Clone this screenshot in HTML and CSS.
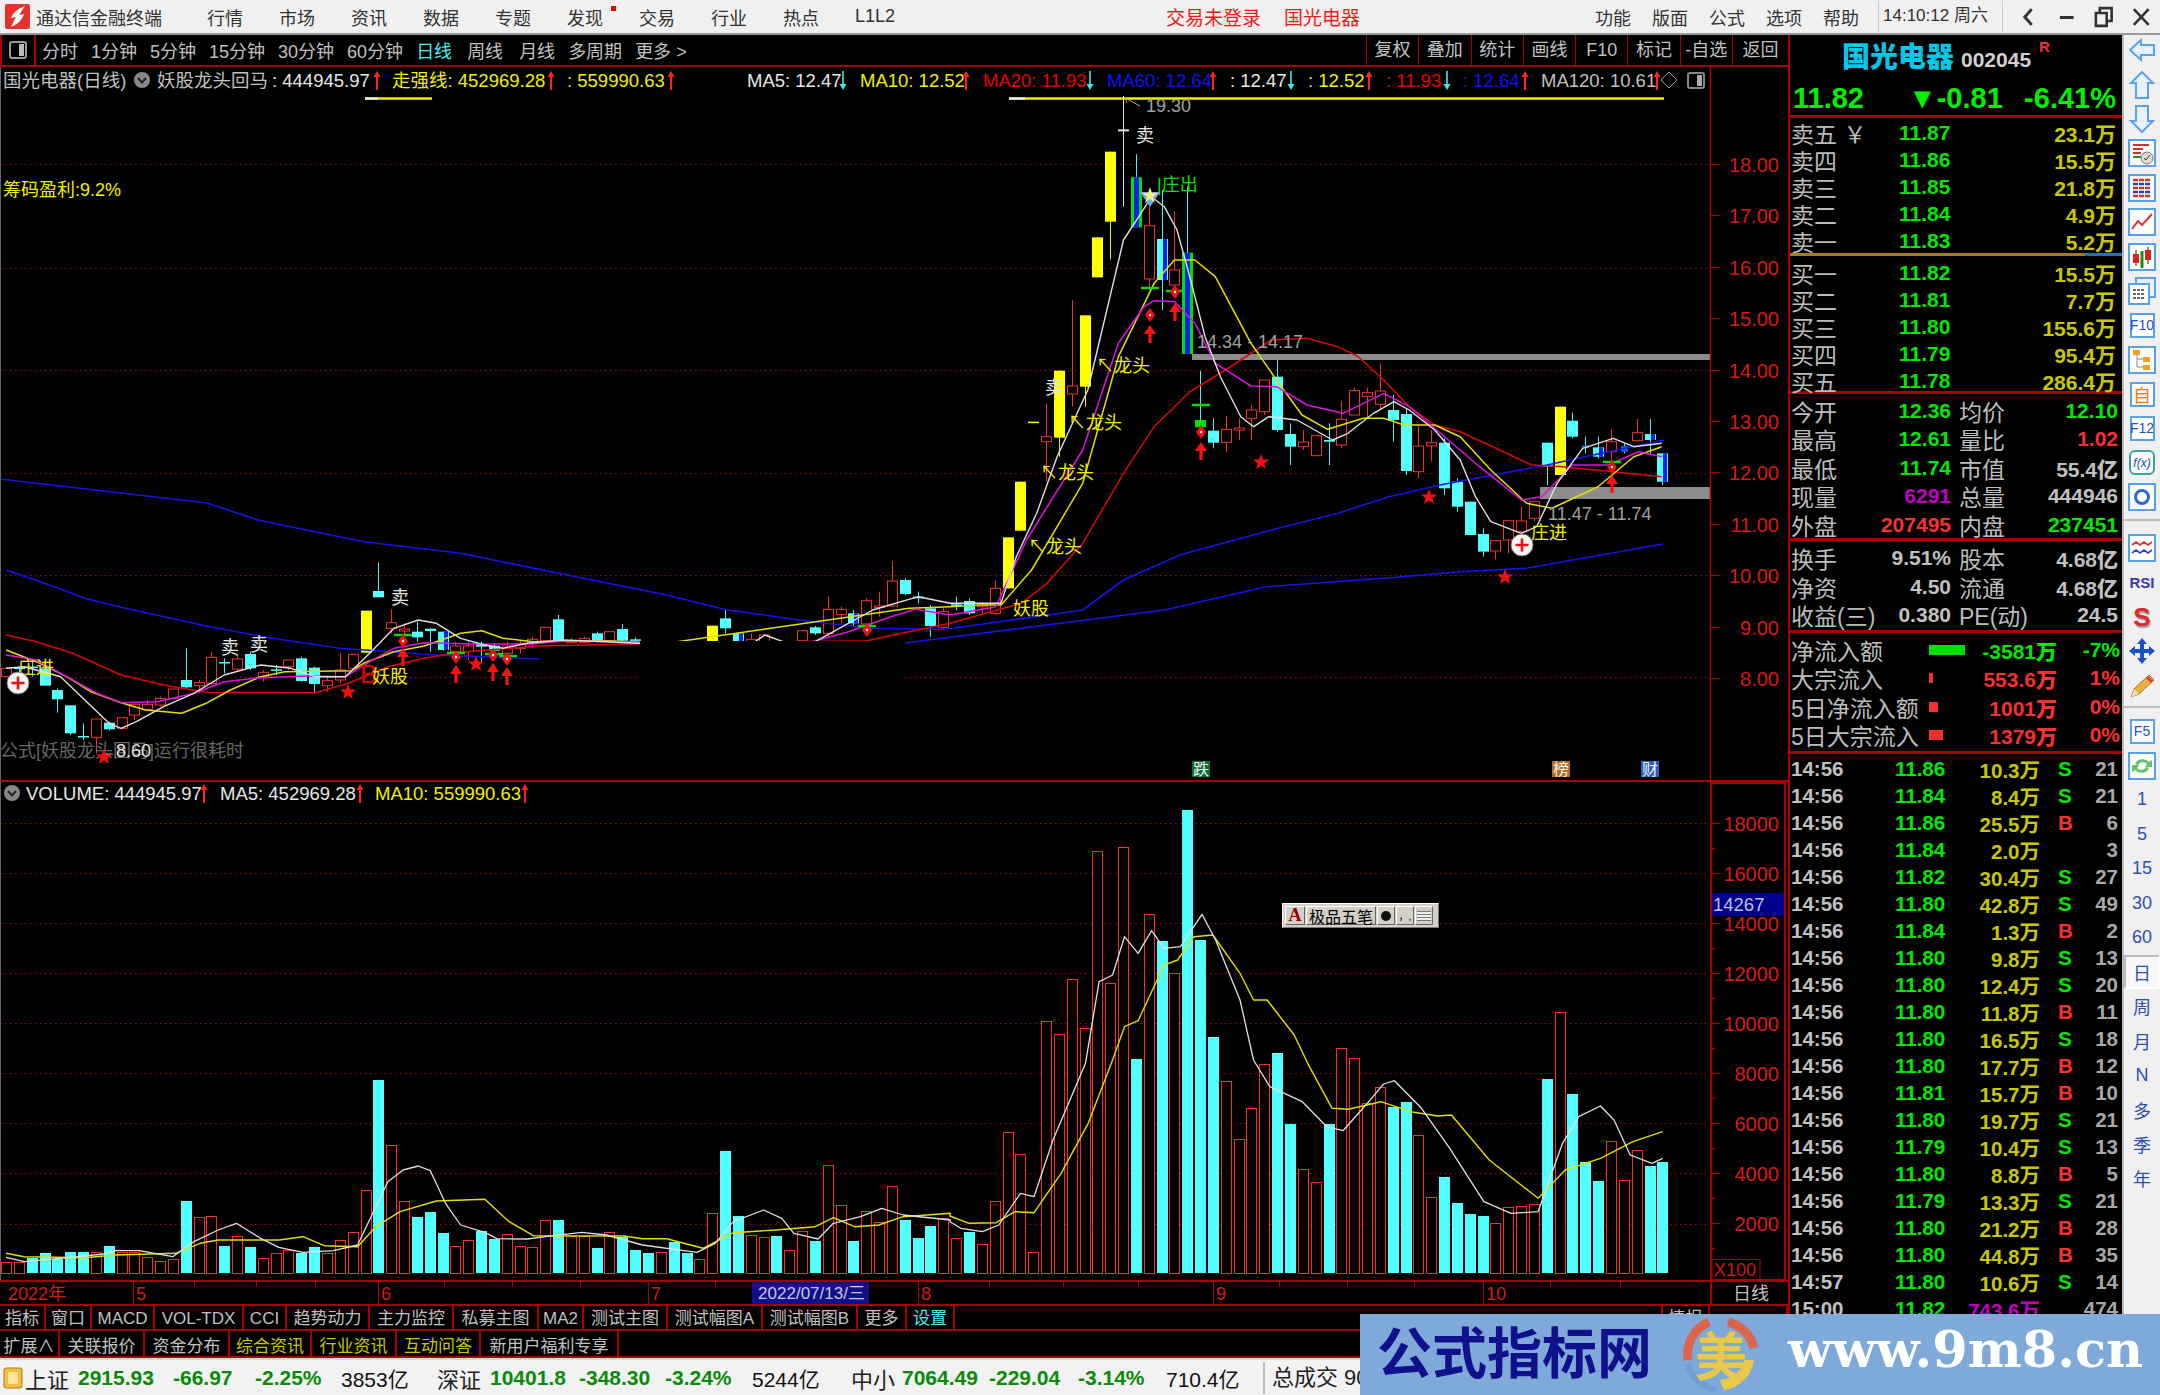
FILE: index.html
```html
<!DOCTYPE html>
<html lang="zh-CN">
<head>
<meta charset="utf-8">
<title>通达信金融终端</title>
<link rel="stylesheet" href="styles.css">
</head>
<body>
<div class="screen">
  <header class="titlebar">
    <svg class="logo" viewBox="0 0 25 25"><rect width="25" height="25" rx="2" fill="#e5322c"/><path d="M20 2 C12 5 8 9 6 14 L11 13 C9 16 8 19 6 23 C13 20 17 16 19 10 L14 11 C16 8 18 5 20 2Z" fill="#fff"/></svg>
    <span class="appname">通达信金融终端</span>
    <nav class="menu">
      <span>行情</span><span>市场</span><span>资讯</span><span>数据</span><span>专题</span><span class="dot">发现</span><span>交易</span><span>行业</span><span>热点</span><span>L1L2</span>
    </nav>
    <div class="alerts"><span>交易未登录</span><span>国光电器</span></div>
    <nav class="menu2"><span>功能</span><span>版面</span><span>公式</span><span>选项</span><span>帮助</span></nav>
    <div class="clock">14:10:12 周六</div>
    <div class="winctl">
      <svg viewBox="0 0 38 32"><path d="M22 8 L15 16 L22 24" fill="none" stroke="#333" stroke-width="3"/></svg>
      <svg viewBox="0 0 38 32"><path d="M12 16.5 H26" stroke="#333" stroke-width="3"/></svg>
      <svg viewBox="0 0 38 32"><path d="M11 12 H22 V25 H11Z M15 12 V7 H27 V20 H22" fill="none" stroke="#333" stroke-width="2.6"/></svg>
      <svg viewBox="0 0 38 32"><path d="M11 8 L26 24 M26 8 L11 24" stroke="#333" stroke-width="2.6"/></svg>
    </div>
  </header>

  <main class="workspace">
    <section class="left">
      <div class="toolbar">
        <div class="tb-btn"><svg width="18" height="18" viewBox="0 0 18 18"><rect x="1" y="1" width="16" height="16" rx="2" fill="none" stroke="#9a9a9a" stroke-width="2"/><rect x="10" y="3" width="5" height="12" fill="#bbb"/></svg></div>
        <div class="periods">
          <span>分时</span><span>1分钟</span><span>5分钟</span><span>15分钟</span><span>30分钟</span><span>60分钟</span><span class="on">日线</span><span class="p2">周线</span><span class="p3">月线</span><span>多周期</span><span>更多 &gt;</span>
        </div>
        <div class="tools"><span>复权</span><span>叠加</span><span>统计</span><span>画线</span><span>F10</span><span>标记</span><span>-自选</span><span class="last">返回</span></div>
      </div>

      <div class="chart">
        <svg class="plot" width="1788" height="1215" viewBox="0 67 1788 1215">
          <defs>
            <path id="au" d="M0 0 L3.5 6 H1 V19 H-1 V6 H-3.5Z" fill="#ff2020"/>
            <path id="ad" d="M-.8 0 H.8 V13 H3.5 L0 19 L-3.5 13 H-.8Z" fill="#40e8f0"/>
            <path id="big" d="M0 0 L6 9 H1.6 V18 H-1.6 V9 H-6Z" fill="#ff1010"/>
            <path id="star" d="M0 -8 L2.2 -2.5 L8 -2.5 L3.4 1.2 L5 7 L0 3.6 L-5 7 L-3.4 1.2 L-8 -2.5 L-2.2 -2.5Z" fill="#f01010"/>
            <g id="dia"><path d="M0 -7 L5 0 L0 7 L-5 0Z" fill="#f01010"/><circle r="1.2" fill="#fff"/></g>
            <g id="plus"><circle r="11" fill="#f4f4f4" stroke="#777"/><path d="M0 -6.5 V6.5 M-6.5 0 H6.5" stroke="#e81010" stroke-width="2.6"/></g>
            <path id="dash" d="M-9 -1.2 H9 V1.2 H-9Z" fill="#00e000"/>
            <g id="chev"><circle r="8" fill="#888"/><path d="M-4 -2 L0 2.5 L4 -2" fill="none" stroke="#222" stroke-width="2"/></g>
          </defs>

          <g id="grid"></g>
          <rect class="band" x="1192" y="354" width="518" height="6"/>
          <rect class="band" x="1540" y="487" width="170" height="12"/>
          <g id="candles"></g>
          <g id="lines"></g>
          <rect class="mask" x="640" y="641" width="262" height="120"/>

          <g class="info">
            <text x="3" y="87" class="g">国光电器(日线)</text>
            <use href="#chev" x="142" y="80"/>
            <text x="157" y="87" class="g">妖股龙头回马</text>
            <text x="272" y="87" class="w">: 444945.97</text><use href="#au" x="377" y="71"/>
            <text x="392" y="87" class="y">走强线: 452969.28</text><use href="#au" x="551" y="71"/>
            <text x="567" y="87" class="y">: 559990.63</text><use href="#au" x="671" y="71"/>
            <text x="747" y="87" class="w">MA5: 12.47</text><use href="#ad" x="843" y="71"/>
            <text x="860" y="87" class="y">MA10: 12.52</text><use href="#au" x="966" y="71"/>
            <text x="983" y="87" class="r">MA20: 11.93</text><use href="#ad" x="1090" y="71"/>
            <text x="1107" y="87" class="b">MA60: 12.64</text><use href="#au" x="1213" y="71"/>
            <text x="1230" y="87" class="w">: 12.47</text><use href="#ad" x="1291" y="71"/>
            <text x="1308" y="87" class="y">: 12.52</text><use href="#au" x="1369" y="71"/>
            <text x="1386" y="87" class="r">: 11.93</text><use href="#ad" x="1447" y="71"/>
            <text x="1463" y="87" class="b">: 12.64</text><use href="#au" x="1525" y="71"/>
            <text x="1541" y="87" class="g">MA120: 10.61</text><use href="#au" x="1657" y="71"/>
            <path d="M1669 72 L1677 80 L1669 88 L1661 80Z" fill="none" stroke="#999"/>
            <rect x="1688" y="73" width="16" height="15" rx="2" fill="none" stroke="#888" stroke-width="2"/><rect x="1697" y="75" width="5" height="11" fill="#aaa"/>
          </g>

          <path d="M365 98.5 H432" class="yl"/><path d="M365 98.5 H378" class="wl"/>
          <path d="M1009 98.5 H1664" class="yl"/><path d="M1009 98.5 H1025" class="wl"/>
          <path d="M1125 98 L1127 103 M1125 98 L1140 106" class="gl"/>

          <g class="ann">
            <text x="3" y="196" class="y">筹码盈利:9.2%</text>
            <text x="1146" y="112" class="g2">19.30</text>
            <text x="1197" y="348" class="g2">14.34 - 14.17</text>
            <text x="1548" y="520" class="g2">11.47 - 11.74</text>
            <text x="0" y="757" class="dim">公式[妖股龙头回马]运行很耗时</text>
            <text x="98" y="757" class="w2">←8.60</text>
            <text x="1136" y="142" class="w2">卖</text>
            <text x="1045" y="394" class="w2">卖</text>
            <text x="221" y="654" class="w2">卖</text>
            <text x="250" y="651" class="w2">卖</text>
            <text x="391" y="604" class="w2">卖</text>
            <text x="1096" y="372" class="y">↖龙头</text>
            <text x="1068" y="429" class="y">↖龙头</text>
            <text x="1040" y="479" class="y">↖龙头</text>
            <text x="1028" y="553" class="y">↖龙头</text>
            <text x="1013" y="615" class="y">妖股</text>
            <text x="360" y="683" class="rb">B</text><text x="372" y="683" class="y">妖股</text>
            <text x="1157" y="191" class="gr">|庄出</text>
            <text x="1531" y="539" class="y">庄进</text>
            <text x="18" y="674" class="y">庄进</text>
          </g>

          <g id="marks"></g>
          <use href="#plus" x="1522" y="545"/>
          <use href="#plus" x="18" y="683"/>
          <g transform="translate(1150 196)"><path d="M-10 -4 L10 -4 L0 11Z" fill="#6fa8f0"/><path d="M0 -9 L2 -3 L8 -3 L3 1 L5 7 L0 3 L-5 7 L-3 1 L-8 -3 L-2 -3Z" fill="#f0f080"/></g>

          <g class="flags">
            <rect x="1192" y="761" width="18" height="16" fill="#0a6e35"/><text x="1193" y="775">跌</text>
            <rect x="1552" y="761" width="18" height="16" fill="#b56a18"/><text x="1553" y="775">榜</text>
            <rect x="1641" y="761" width="18" height="16" fill="#2b5fc0"/><text x="1642" y="775">财</text>
          </g>

          <g id="axis"></g>

          <g class="info">
            <use href="#chev" x="12" y="793"/>
            <text x="26" y="800" class="w">VOLUME: 444945.97</text><use href="#au" x="204" y="784"/>
            <text x="220" y="800" class="w">MA5: 452969.28</text><use href="#au" x="360" y="784"/>
            <text x="375" y="800" class="y">MA10: 559990.63</text><use href="#au" x="525" y="784"/>
          </g>

          <g id="vol"></g>

          <rect class="vbox" x="1711" y="783" width="74" height="497"/>
          <rect x="1712" y="893" width="72" height="23" fill="#00008c"/>
          <text x="1713" y="911" class="axv">14267</text>
          <rect class="xbox" x="1712" y="1259.5" width="48" height="20"/>
          <text x="1714" y="1276" class="xt">X100</text>
        </svg>

        <div class="ime">
          <span class="ime-a">A</span><span class="ime-n">极品五笔</span>
          <span class="ime-i ime-moon"></span><span class="ime-i">，,</span><span class="ime-i ime-kb"></span>
        </div>
      </div>

      <div class="dates">
        <span class="d0">2022年</span><span class="d1">5</span><span class="d2">6</span><span class="d2">7</span><span class="d3">8</span><span class="d2">9</span><span class="d4">10</span><span class="d5">日线</span>
        <span class="cursor">2022/07/13/三</span>
      </div>
      <div class="tabs t1">
        <span>指标</span><span>窗口</span><span>MACD</span><span>VOL-TDX</span><span>CCI</span><span>趋势动力</span><span>主力监控</span><span>私募主图</span><span>MA2</span><span>测试主图</span><span>测试幅图A</span><span>测试幅图B</span><span>更多</span><span class="cy">设置</span><span></span><span>情报</span><span></span>
      </div>
      <div class="tabs t2">
        <span>扩展∧</span><span>关联报价</span><span>资金分布</span><span class="ol">综合资讯</span><span class="ol">行业资讯</span><span class="ol">互动问答</span><span>新用户福利专享</span><span></span>
      </div>
    </section>

    <aside class="quote">
      <div class="q-head">
        <div class="q-name"><strong>国光电器</strong><span>002045</span><sup>R</sup></div>
        <div class="q-price"><span>11.82</span><span>▼-0.81</span><span>-6.41%</span></div>
      </div>
      <div class="book upper">
        <div><label>卖五 ￥</label><b>11.87</b><em>23.1万</em></div>
        <div><label>卖四</label><b>11.86</b><em>15.5万</em></div>
        <div><label>卖三</label><b>11.85</b><em>21.8万</em></div>
        <div><label>卖二</label><b>11.84</b><em>4.9万</em></div>
        <div><label>卖一</label><b>11.83</b><em>5.2万</em></div>
      </div>
      <div class="book-sep"></div>
      <div class="book lastbook">
        <div><label>买一</label><b>11.82</b><em>15.5万</em></div>
        <div><label>买二</label><b>11.81</b><em>7.7万</em></div>
        <div><label>买三</label><b>11.80</b><em>155.6万</em></div>
        <div><label>买四</label><b>11.79</b><em>95.4万</em></div>
        <div><label>买五</label><b>11.78</b><em>286.4万</em></div>
      </div>
      <div class="stats s1">
        <div><label>今开</label><b class="gn">12.36</b><label>均价</label><b class="gn">12.10</b></div>
        <div><label>最高</label><b class="gn">12.61</b><label>量比</label><b class="rd">1.02</b></div>
        <div><label>最低</label><b class="gn">11.74</b><label>市值</label><b>55.4亿</b></div>
        <div><label>现量</label><b class="mg">6291</b><label>总量</label><b>444946</b></div>
        <div><label>外盘</label><b class="rd">207495</b><label>内盘</label><b class="gn">237451</b></div>
      </div>
      <div class="stats s2">
        <div><label>换手</label><b>9.51%</b><label>股本</label><b>4.68亿</b></div>
        <div><label>净资</label><b>4.50</b><label>流通</label><b>4.68亿</b></div>
        <div><label>收益(三)</label><b>0.380</b><label>PE(动)</label><b>24.5</b></div>
      </div>
      <div class="flow">
        <div><label>净流入额</label><i class="bar bg-g" style="width:36px"></i><b class="gn">-3581万</b><b class="gn">-7%</b></div>
        <div><label>大宗流入</label><i class="bar bg-r" style="width:4px"></i><b class="rd">553.6万</b><b class="rd">1%</b></div>
        <div><label>5日净流入额</label><i class="bar bg-r" style="width:9px"></i><b class="rd">1001万</b><b class="rd">0%</b></div>
        <div><label>5日大宗流入</label><i class="bar bg-r" style="width:14px"></i><b class="rd">1379万</b><b class="rd">0%</b></div>
      </div>
      <div class="ticks">
        <div><span>14:56</span><b>11.86</b><em>10.3万</em><i class="gn">S</i><u>21</u></div>
        <div><span>14:56</span><b>11.84</b><em>8.4万</em><i class="gn">S</i><u>21</u></div>
        <div><span>14:56</span><b>11.86</b><em>25.5万</em><i class="rd">B</i><u>6</u></div>
        <div><span>14:56</span><b>11.84</b><em>2.0万</em><i></i><u>3</u></div>
        <div><span>14:56</span><b>11.82</b><em>30.4万</em><i class="gn">S</i><u>27</u></div>
        <div><span>14:56</span><b>11.80</b><em>42.8万</em><i class="gn">S</i><u>49</u></div>
        <div><span>14:56</span><b>11.84</b><em>1.3万</em><i class="rd">B</i><u>2</u></div>
        <div><span>14:56</span><b>11.80</b><em>9.8万</em><i class="gn">S</i><u>13</u></div>
        <div><span>14:56</span><b>11.80</b><em>12.4万</em><i class="gn">S</i><u>20</u></div>
        <div><span>14:56</span><b>11.80</b><em>11.8万</em><i class="rd">B</i><u>11</u></div>
        <div><span>14:56</span><b>11.80</b><em>16.5万</em><i class="gn">S</i><u>18</u></div>
        <div><span>14:56</span><b>11.80</b><em>17.7万</em><i class="rd">B</i><u>12</u></div>
        <div><span>14:56</span><b>11.81</b><em>15.7万</em><i class="rd">B</i><u>10</u></div>
        <div><span>14:56</span><b>11.80</b><em>19.7万</em><i class="gn">S</i><u>21</u></div>
        <div><span>14:56</span><b>11.79</b><em>10.4万</em><i class="gn">S</i><u>13</u></div>
        <div><span>14:56</span><b>11.80</b><em>8.8万</em><i class="rd">B</i><u>5</u></div>
        <div><span>14:56</span><b>11.79</b><em>13.3万</em><i class="gn">S</i><u>21</u></div>
        <div><span>14:56</span><b>11.80</b><em>21.2万</em><i class="rd">B</i><u>28</u></div>
        <div><span>14:56</span><b>11.80</b><em>44.8万</em><i class="rd">B</i><u>35</u></div>
        <div><span>14:57</span><b>11.80</b><em>10.6万</em><i class="gn">S</i><u>14</u></div>
        <div><span>15:00</span><b>11.82</b><em class="mg">743.6万</em><i></i><u>474</u></div>
      </div>
    </aside>

    <aside class="rail">
      <div class="ri"><svg viewBox="0 0 30 30"><path d="M3 15 L14 5 V10 H27 V20 H14 V25Z" fill="#e8f2fc" stroke="#5aa2e6" stroke-width="2"/></svg></div>
      <div class="ri"><svg viewBox="0 0 30 30"><path d="M15 2 L26 13 H21 V28 H9 V13 H4Z" fill="#e8f2fc" stroke="#5aa2e6" stroke-width="2"/></svg></div>
      <div class="ri"><svg viewBox="0 0 30 30"><path d="M15 28 L26 17 H21 V2 H9 V17 H4Z" fill="#e8f2fc" stroke="#5aa2e6" stroke-width="2"/></svg></div>
      <div class="ri"><svg viewBox="0 0 30 30"><rect x="2" y="2" width="26" height="26" fill="#fff" stroke="#5aa2e6" stroke-width="2"/><path d="M6 7 H22 M6 11 H16 M6 15 H14" stroke="#d03030" stroke-width="2"/><path d="M6 19 H14" stroke="#2a9a2a" stroke-width="2"/><circle cx="20" cy="20" r="6" fill="#ddd" stroke="#777"/><path d="M17 20 L19 22 L23 17" fill="none" stroke="#333"/></svg></div>
      <div class="ri"><svg viewBox="0 0 30 30"><rect x="2" y="2" width="26" height="26" fill="#fff" stroke="#5aa2e6" stroke-width="2"/><path d="M6 7 H24 M6 15 H24 M6 23 H24" stroke="#d03030" stroke-width="2.5" stroke-dasharray="5 1"/><path d="M6 11 H24 M6 19 H24" stroke="#2040c0" stroke-width="2.5" stroke-dasharray="5 1"/></svg></div>
      <div class="ri"><svg viewBox="0 0 30 30"><rect x="2" y="2" width="26" height="26" fill="#fff" stroke="#5aa2e6" stroke-width="2"/><path d="M5 22 L11 14 L15 18 L25 7" fill="none" stroke="#e83030" stroke-width="2"/></svg></div>
      <div class="ri"><svg viewBox="0 0 30 30"><rect x="2" y="2" width="26" height="26" fill="#fff" stroke="#5aa2e6" stroke-width="2"/><path d="M9 8 V24 M21 5 V22" stroke="#222"/><rect x="6" y="12" width="6" height="9" fill="#e02020"/><rect x="18" y="8" width="6" height="10" fill="#e02020"/><path d="M15 9 V26" stroke="#1a8a1a" stroke-width="3"/></svg></div>
      <div class="ri"><svg viewBox="0 0 30 30"><rect x="9" y="2" width="19" height="19" fill="#eef" stroke="#5aa2e6" stroke-width="2"/><rect x="2" y="8" width="20" height="20" fill="#fff" stroke="#5aa2e6" stroke-width="2"/><path d="M6 14 H18 M6 18 H18 M6 22 H18" stroke="#666" stroke-width="2" stroke-dasharray="3 1"/></svg></div>
      <div class="ri"><span class="rb-box blue">F10</span></div>
      <div class="ri"><svg viewBox="0 0 30 30"><rect x="2" y="2" width="26" height="26" fill="#fff" stroke="#5aa2e6" stroke-width="2"/><path d="M10 8 V22 H17 M10 14 H17" fill="none" stroke="#888"/><rect x="6" y="5" width="7" height="5" fill="#f0a020"/><rect x="16" y="12" width="7" height="5" fill="#f0a020"/><rect x="16" y="20" width="7" height="5" fill="#f0a020"/></svg></div>
      <div class="ri"><span class="rb-box orange">自</span></div>
      <div class="ri"><span class="rb-box blue">F12</span></div>
      <div class="ri"><span class="rb-box fx">f(x)</span></div>
      <div class="ri"><svg viewBox="0 0 30 30"><rect x="2" y="2" width="26" height="26" fill="#fff" stroke="#5aa2e6" stroke-width="2"/><circle cx="15" cy="15" r="6.5" fill="none" stroke="#2a6ad0" stroke-width="3"/></svg></div>
      <div class="rdiv"></div>
      <div class="ri"><svg viewBox="0 0 30 30"><rect x="2" y="2" width="26" height="26" fill="#fff" stroke="#5aa2e6" stroke-width="2"/><path d="M5 12 L9 9 L13 12 L17 9 L21 12 L25 9" fill="none" stroke="#e03030" stroke-width="1.6"/><path d="M5 20 L9 17 L13 20 L17 17 L21 20 L25 17" fill="none" stroke="#3040d0" stroke-width="1.6"/></svg></div>
      <div class="ri rsi">RSI</div>
      <div class="ri dollar">S</div>
      <div class="ri"><svg viewBox="0 0 30 30"><path d="M15 2 L20 8 H17 V13 H22 V10 L28 15 L22 20 V17 H17 V22 H20 L15 28 L10 22 H13 V17 H8 V20 L2 15 L8 10 V13 H13 V8 H10Z" fill="#1c50c8"/></svg></div>
      <div class="ri"><svg viewBox="0 0 30 30"><path d="M4 26 L7 18 L22 4 L27 9 L12 23Z" fill="#f0b040" stroke="#a07020"/><path d="M4 26 L7 18 L12 23Z" fill="#f4dcb0"/><path d="M20 6 L25 11" stroke="#d04040" stroke-width="3"/></svg></div>
      <div class="rdiv r2"></div>
      <div class="ri"><span class="rb-box blue">F5</span></div>
      <div class="ri"><svg viewBox="0 0 30 30"><rect x="2" y="2" width="26" height="26" fill="#fff" stroke="#5aa2e6" stroke-width="2"/><path d="M8 13 A8 7 0 0 1 22 11 L25 9 V16 H18 L20 13 A5 4 0 0 0 11 14Z M22 17 A8 7 0 0 1 8 19 L5 21 V14 H12 L10 17 A5 4 0 0 0 19 16Z" fill="#62c46a"/></svg></div>
      <div class="ri n">1</div><div class="ri n">5</div><div class="ri n">15</div><div class="ri n">30</div><div class="ri n">60</div>
      <div class="ri n sel">日</div><div class="ri n">周</div><div class="ri n">月</div><div class="ri n">N</div><div class="ri n">多</div><div class="ri n">季</div><div class="ri n">年</div>
    </aside>
  </main>

  <footer class="statusbar">
    <svg width="20" height="22" viewBox="0 0 20 22"><rect x="1" y="1" width="18" height="20" rx="2" fill="#f2c040" stroke="#a87818"/><rect x="5" y="5" width="10" height="12" fill="#fde49a"/></svg>
    <span class="k">上证</span><b>2915.93</b><b>-66.97</b><b>-2.25%</b><span class="v">3853亿</span>
    <span class="k">深证</span><b>10401.8</b><b>-348.30</b><b>-3.24%</b><span class="v">5244亿</span>
    <span class="k">中小</span><b>7064.49</b><b>-229.04</b><b>-3.14%</b><span class="v">710.4亿</span>
    <span class="k total">总成交 9037亿</span>
  </footer>

  <div class="banner">
    <span class="b-cn">公式指标网</span>
    <svg class="b-logo" width="90" height="81" viewBox="0 0 90 81">
      <path d="M33 8 A35 35 0 0 0 12 46" fill="none" stroke="#d9654c" stroke-width="9"/>
      <path d="M52 8 A35 35 0 0 1 78 34" fill="none" stroke="#d9654c" stroke-width="9"/>
      <path d="M78 46 A35 35 0 0 1 48 76 L44 66 A26 26 0 0 0 68 46Z" fill="#eac94a"/>
      <path d="M12 50 A35 35 0 0 0 40 76" fill="none" stroke="#6f9fd2" stroke-width="6"/>
      <text x="45" y="62" class="b-mei">美</text>
    </svg>
    <span class="b-url">www.9m8.cn</span>
  </div>
</div>
<script src="chart.js"></script>
</body>
</html>
```

FILE: styles.css
```css
*{box-sizing:border-box}
html,body{margin:0;padding:0;background:#000}
body{font-family:"Liberation Sans","Noto Sans CJK SC",sans-serif;color:#c0c0c0}
.screen{position:relative;width:2160px;height:1395px;overflow:hidden;background:#000}

/* title bar */
.titlebar{display:flex;align-items:center;height:35px;background:#f0f0f0;border-bottom:2px solid #9a9a9a;color:#333;font-size:18px;padding-left:5px;white-space:nowrap}
.logo{width:25px;height:25px;flex:none}
.appname{margin-left:6px;width:126px;flex:none}
.menu{display:flex;align-items:center;gap:36px;margin-left:45px}
.dot{position:relative}
.dot::after{content:"";position:absolute;left:44px;top:2px;width:5px;height:5px;background:#f00000}
.alerts{display:flex;gap:23px;margin-left:271px;color:#f01818;font-size:19px}
.menu2{display:flex;gap:21px;margin-left:auto}
.clock{margin-left:19px;width:125px;height:31px;line-height:30px;border-left:1px solid #c8c8c8;border-right:1px solid #c8c8c8;padding-left:4px;font-size:17px;flex:none}
.winctl{display:flex;margin-left:7px;flex:none}
.winctl svg{width:37.5px;height:32px}

/* layout */
.workspace{display:flex;height:1323px}
.left{width:1788px;flex:none;display:flex;flex-direction:column;background:#000}
.toolbar{display:flex;height:32px;align-items:stretch;border-bottom:2px solid #a80000;font-size:18px;color:#c0c0c0;flex:none}
.tb-btn{width:36px;display:flex;align-items:center;justify-content:center;border-right:2px solid #a80000;border-left:2px solid #a80000;flex:none}
.periods{display:flex;gap:13px;align-items:center;margin-left:6px}
.periods .on{color:#40f0f0}
.periods .p2{margin-left:2px}
.periods .p3{margin-left:3px}
.tools{display:flex;margin-left:auto}
.tools span{width:52.3px;border-left:1px solid #a80000;text-align:center;line-height:31px}
.tools .last{width:56px}

/* chart */
.chart{position:relative;height:1215px;flex:none}
.plot{display:block;overflow:visible;position:relative;z-index:1}
.plot text{font-family:"Liberation Sans","Noto Sans CJK SC",sans-serif}
.info text{font-size:18.5px}
.g{fill:#c0c0c0}.w{fill:#e8e8e8}.y{fill:#f0f000}.r{fill:#e80000}.b{fill:#1010f0}
.ann text{font-size:18px}
.g2{fill:#a0a0a0}
.dim{fill:#666}
.w2{fill:#e4e4e4}
.rb{fill:#e00000;font-size:26px !important}
.gr{fill:#00e000}
.band{fill:#8c8c8c}
.mask{fill:#000}
.yl{stroke:#f0f000;stroke-width:2.4;fill:none}
.wl{stroke:#e8e8e8;stroke-width:2.4;fill:none}
.gl{stroke:#aaa;fill:none}
.flags text{font-size:16px;fill:#f4f4f4}
.axl{fill:#d81818;font-size:20px;text-anchor:end}
.vbox{fill:none;stroke:#a80000;stroke-width:2}
.axv{fill:#c0c0e0;font-size:18.5px}
.xbox{fill:none;stroke:#a80000;stroke-width:1}
.xt{fill:#c81818;font-size:18px}

.ime{position:absolute;z-index:2;left:1282px;top:836px;width:157px;height:25px;display:flex;align-items:stretch;gap:1px;padding:2px;background:#d4d0c8;border:1px solid;border-color:#fff #777 #777 #fff;font-size:16px;color:#000}
.ime span{display:flex;align-items:center;justify-content:center;border:1px solid;border-color:#fff #666 #666 #fff;background:#d4d0c8}
.ime-a{width:20px;color:#900;font-family:"Liberation Serif",serif;font-weight:700;font-size:18px}
.ime-n{width:70px}
.ime-i{width:18px;font-size:10px}
.ime-moon::before{content:"";width:10px;height:10px;border-radius:50%;background:#111}
.ime-kb::before{content:"";width:14px;height:10px;background:repeating-linear-gradient(0deg,#777 0 1px,#eee 1px 3px)}

/* dates and tabs */
.dates{position:relative;display:flex;height:24px;flex:none;color:#d81818;font-size:18px;line-height:24px;border-bottom:2px solid #a80000}
.dates span{border-left:1px solid #a80000;padding-left:2px;flex:none}
.d0{width:133px;padding-left:8px !important;border-left:0 !important}
.d1{width:245px}.d2{width:270px}.d3{width:295px}.d4{width:227px}
.d5{width:78px;color:#c0c0c0;text-align:center;border-left:2px solid #a80000 !important;font-size:18px}
.dates .cursor{position:absolute;left:752px;top:0;width:117px;height:22px;background:#10108c;color:#c8c8e0;border:0;text-align:center;font-size:17px}
.tabs{display:grid;flex:none;color:#c0c0c0;font-size:17px;border-bottom:2px solid #a80000}
.tabs span{border-right:2px solid #a80000;text-align:center;white-space:nowrap;overflow:hidden}
.t1{height:25px;line-height:26px;grid-template-rows:23px;grid-template-columns:46px 46px 63px 89px 43px 83px 84px 85px 45px 84px 95px 95px 49px 48px 708px 47px 78px}
.t2{height:27px;line-height:31px;grid-template-rows:25px;grid-template-columns:60px 85px 85px 82px 85px 84px 138px 1fr}
.tabs .cy{color:#40f0f0}
.tabs .ol{color:#c8c800}

/* quote panel */
.quote{width:334px;flex:none;border-left:2px solid #a80000;display:flex;flex-direction:column;font-weight:700}
.q-head{height:83px;border-bottom:3px solid #a80000;flex:none}
.q-name{display:flex;align-items:baseline;height:46px;padding:0 0 0 52px;white-space:nowrap}
.q-name strong{color:#00c8e8;font-size:28px}
.q-name span{color:#d0d0d0;font-size:21px;margin-left:7px;font-weight:700}
.q-name sup{color:#f03030;font-size:15px;margin-left:8px;align-self:flex-start;margin-top:4px;line-height:1}
.q-price{display:flex;color:#00f000;font-size:29px;padding:0 6px 0 3px;line-height:34px}
.q-price span:nth-child(2){margin-left:44px}
.q-price span:nth-child(3){margin-left:auto}
.book{flex:none;padding-top:0}
.upper{margin-top:-2px}
.book div{display:grid;grid-template-columns:108px 1fr auto;height:27px;align-items:center;padding:0 6px 0 1px}
.book label,.stats label,.flow label{font-weight:400;font-size:23px;color:#bcbcbc;white-space:nowrap}
.book b{color:#00e800;font-size:21px}
.book em{font-style:normal;color:#c8c800;font-size:21px}
.book-sep{height:3px;flex:none;margin-top:2px;background:linear-gradient(90deg,#a87a20 89%,#2070c0 89%)}
.lastbook{border-bottom:3px solid #a80000;height:138px}
.stats{flex:none}
.stats div{display:grid;grid-template-columns:70px 90px 70px 97px;align-items:center;padding-left:1px;white-space:nowrap}
.stats b{text-align:right;font-size:21px;color:#c0c0c0}
.stats label:nth-child(3){margin-left:8px}
.s1{height:147px;border-bottom:3px solid #a80000}
.s1 div{height:28.4px}
.s2{height:92px;border-bottom:3px solid #a80000}
.s2 div{height:28.6px}
.flow{height:121px;flex:none;border-bottom:3px solid #a80000}
.flow div{display:grid;grid-template-columns:138px 48px 80px 63px;align-items:center;height:28.4px;padding-left:1px;white-space:nowrap}
.flow b{text-align:right;font-size:21px}
.bar{display:block;height:10px}
.bg-g{background:#00e000}
.bg-r{background:#f03030}
.gn{color:#00e800 !important}
.rd{color:#f83030 !important}
.mg{color:#c000c0 !important}
.ticks{flex:none}
.ticks div{display:grid;grid-template-columns:104px 65px 80px 35px 43px;height:27px;align-items:center;padding-left:1px;font-size:20.5px;white-space:nowrap}
.ticks span{color:#c0c0c0}
.ticks b{color:#00e800}
.ticks em{font-style:normal;text-align:right;color:#c8c800}
.ticks i{font-style:normal;padding-left:18px}
.ticks u{text-decoration:none;text-align:right;color:#a8a8a8}

/* rail */
.rail{width:38px;flex:none;background:#f0f0f0;border-left:2px solid #bbb;margin-left:0;position:relative}
.ri{height:34.4px;display:flex;align-items:center;justify-content:center;position:relative;top:-2px;color:#2a50b0}
.ri svg{width:30px;height:30px}
.rdiv{height:11.6px;position:relative;top:-2px}
.rdiv::after{content:"";display:block;height:2px;margin:5px 0 0;background:#bdbdbd}
.r2{height:8px}
.r2::after{margin-top:3px}
.rb-box{display:flex;align-items:center;justify-content:center;width:25px;height:25px;background:#fff;border:2px solid #5aa2e6;font-size:14px;color:#2a50c0;font-weight:400}
.orange{color:#f07a20;font-size:18px}
.fx{color:#1050a0;font-size:12px;font-style:italic;border-radius:6px;border-color:#40a0a0;width:26px}
.rsi{font-weight:700;font-size:15px;color:#3838b0}
.dollar{font-weight:700;font-size:26px;color:#e02828;text-shadow:1px 2px 1px #999}
.n{font-size:18px;font-weight:400;color:#2a50b0}
.sel{background:#f8f8f8;border:2px solid;border-color:#bbb #fff #fff #bbb;margin-left:0}

/* status bar */
.statusbar{display:grid;grid-template-columns:22px 53px 95px 82px 86px 96px 53px 89px 86px 87px 99px 51px 87px 89px 88px 97px 110px;align-items:center;height:37px;background:#f2f2f2;padding-left:3px;border-top:2px solid #d8d8d8;white-space:nowrap}
.statusbar b{color:#0a8a0a;font-size:21px}
.statusbar .k{font-size:22px;color:#222;font-weight:400}
.statusbar .v{font-size:21px;color:#111;font-weight:400}
.statusbar .total{border-left:2px solid #bbb;padding-left:7px;line-height:32px}

/* banner */
.banner{position:absolute;z-index:5;left:1360px;top:1314px;width:800px;height:81px;background:#7ea9d8;display:flex;align-items:center;padding-left:17px;white-space:nowrap}
.b-cn{font-size:55px;font-weight:700;color:#10108c;width:274px;flex:none;line-height:1}
.b-logo{margin-left:25px;flex:none}
.b-mei{font-size:52px;font-weight:700;fill:#eac94a;text-anchor:middle;font-family:"Noto Sans CJK SC",sans-serif}
.b-url{font-family:"DejaVu Serif",serif;font-weight:700;font-size:51px;color:#fff;margin-left:22px;line-height:1;position:relative;top:-5px}
```

FILE: chart.js
```js
(function () {
  var X = function (i) { return 6 + 12.84 * i; };
  var $ = function (id) { return document.getElementById(id); };

  /* zoomed sample spaces -> page coordinates */
  var S = {
    a: function (p) { return [p[0] / 1.65, 520 + p[1] / 3]; },
    b: function (p) { return [950 + p[0] / 1.96, 90 + p[1] / 3]; },
    c: function (p) { return [p[0] / 1.65, 1000 + p[1] / 3]; },
    d: function (p) { return [950 + p[0] / 1.845, 780 + p[1] / 3]; }
  };
  function pts(space, flat) {
    var out = [];
    for (var k = 0; k < flat.length; k += 2) out.push(S[space]([flat[k], flat[k + 1]]));
    return out;
  }
  function poly(list, color, w) {
    return '<polyline fill="none" stroke-linejoin="round" stroke="' + color + '" stroke-width="' + w + '" points="' +
      list.map(function (p) { return p[0].toFixed(1) + ',' + p[1].toFixed(1); }).join(' ') + '"/>';
  }

  /* ---- grid + axes ---- */
  var g = '';
  [164, 268, 370, 473, 575, 677].forEach(function (y) {
    g += '<path d="M0 ' + (y + .5) + ' H1710" stroke="#b00000" stroke-dasharray="1.5 3.5"/>';
  });
  [823, 873, 923, 973, 1023, 1073, 1123, 1173, 1224].forEach(function (y) {
    g += '<path d="M0 ' + (y + .5) + ' H1710" stroke="#b00000" stroke-dasharray="1.5 3.5"/>';
  });
  $('grid').innerHTML = g;

  var a = '';
  a += '<path d="M.5 67 V1282" stroke="#666"/>';
  a += '<path d="M1710.5 67 V781" stroke="#b00000" stroke-width="1.5"/>';
  a += '<path d="M0 781 H1788" stroke="#a80000" stroke-width="2"/>';
  a += '<path d="M0 1281 H1788" stroke="#a80000" stroke-width="2"/>';
  [18, 17, 16, 15, 14, 13, 12, 11, 10, 9, 8].forEach(function (v, n) {
    var y = Math.round(164 + n * 51.4);
    a += '<path d="M1711 ' + (y + .5) + ' H1720" stroke="#b00000"/>';
    a += '<text class="axl" x="1779" y="' + (y + 8) + '">' + v + '.00</text>';
  });
  [18000, 16000, 14000, 12000, 10000, 8000, 6000, 4000, 2000].forEach(function (v, n) {
    var y = Math.round(823 + n * 50);
    a += '<path d="M1711 ' + (y + .5) + ' H1720" stroke="#b00000"/>';
    a += '<text class="axl" x="1779" y="' + (y + 8) + '">' + v + '</text>';
    a += '<path d="M1711 ' + (y + 25.5) + ' H1715" stroke="#b00000"/>';
  });
  [194, 256, 315, 378, 444, 512, 580, 648, 715, 989, 1063, 1138, 1213, 1279, 1347, 1414, 1483, 1550, 1620].forEach(function (x) {
    a += '<path d="M' + (x + .5) + ' 1282 V1287" stroke="#b00000"/>';
  });
  $('axis').innerHTML = a;

  /* ---- candles: type, wick top, body top, body bottom, wick bottom ---- */
  var A = [ /* i = 0.. sampled with base 520 */
    'r445,445,470,470','c440,443,447,470','c420,440,444,470','c440,445,497,497','c505,510,538,578','c556,556,640,645',
    'c610,648,652,660','r597,597,652,700','c605,608,628,632','r593,593,625,628','r550,553,585,600','r540,553,568,572',
    'r530,535,555,560','r507,507,535,540','c385,480,502,505','r480,488,497,520','r395,412,490,495','c415,426,430,460',
    'r405,417,447,455','c395,402,445,450','r450,457,470,485','c435,448,452,465','r420,420,440,450','c410,415,483,485',
    'c440,443,492,520','r470,482,497,515','r400,450,480,490','r403,403,445,450','y272,272,398,398','c128,213,232,232',
    'r268,308,325,340','r310,327,333,345','c305,335,352,365','c325,326,333,395','k335,335,390,392','r365,378,395,420',
    'r360,378,395,420','c365,372,380,430','c370,377,392,410','r365,378,400,415','r360,370,385,400','r350,358,370,385',
    'r322,322,362,365','c285,298,362,365','r355,363,368,370','r350,355,368,370','c335,340,365,368','r335,335,362,366',
    'c312,327,362,368','c352,358,362,370','r362,366,369,372','r362,366,369,372','r366,367,369,372','','',
    'y317,317,372,372','c270,295,325,340','k340,340,372,372','r340,358,372,372','r345,345,372,372','r365,368,372,372','',
    'r332,332,362,372','c318,322,340,345','r228,268,340,350','r260,268,284,310','k270,280,310,320','r235,242,312,320',
    'r215,258,262,290','r124,183,258,262','c175,180,222,225','c215,230,235,250','c255,265,318,350','r265,275,322,325'
  ];
  var B = [ /* i = 74.. sampled with base 90 */
    'c1520,1543,1547,1560','c1525,1533,1570,1575','r1535,1545,1550,1570','r1470,1495,1570,1575','y1342,1342,1495,1495',
    'y1175,1175,1322,1322','y995,995,999,999','r940,1040,1055,1175','y842,842,1043,1100','r630,888,912,950','y676,676,890,950',
    'y442,442,562,562','y185,185,395,508','w18,121,125,350','g193,262,412,412','r300,407,567,600','k300,447,570,660',
    'r365,540,585,610','g290,488,792,792','l843,990,1012,1012','c985,1022,1058,1075','r978,1018,1057,1085','r985,1014,1020,1050',
    'r945,960,985,1050','r870,870,965,975','c810,860,1020,1025','c1000,1032,1070,1125','r1020,1056,1070,1080','r1037,1037,1097,1097',
    'c1000,1050,1055,1125','r932,988,1065,1075','r893,902,975,975','r893,908,920,985','r820,903,943,960','c915,960,990,1055',
    'c955,972,1143,1155','r1005,1068,1145,1165','r1020,1058,1068,1115','c1045,1058,1195,1215','c1165,1175,1250,1265',
    'c1235,1235,1335,1335','c1315,1332,1385,1400','r1352,1352,1383,1408','r1292,1292,1350,1390','r1250,1293,1325,1340',
    'r1235,1235,1285,1295','c1058,1058,1130,1185','y950,950,1155,1155','c968,992,1040,1045','b1040,1066,1074,1090','k1040,1072,1100,1105',
    'r1018,1055,1085,1135','b1060,1068,1085,1090','r987,1028,1052,1055','k987,1032,1050,1095','k1090,1090,1175,1185'
  ];
  var WICK = { r: '#f03030', c: '#50f0f0', k: '#50f0f0', y: '#f0f000', g: '#50f0f0', l: '#50f0f0', b: '#50f0f0', w: '#e0e0e0' };

  function candle(i, spec, base) {
    if (!spec) return '';
    var t = spec.charAt(0), v = spec.slice(1).split(',').map(function (n) { return base + n / 3; });
    var x = Math.round(X(i)), l = x - 5, s = '';
    s += '<path d="M' + (x + .5) + ' ' + v[0] + ' V' + v[3] + '" stroke="' + WICK[t] + '"/>';
    var h = Math.max(v[2] - v[1], 1.5);
    if (t === 'r') s += '<rect x="' + (l + .5) + '" y="' + v[1] + '" width="10" height="' + h + '" fill="#000" stroke="#f03030"/>';
    if (t === 'c') s += '<rect x="' + l + '" y="' + v[1] + '" width="11" height="' + h + '" fill="#54ffff"/>';
    if (t === 'y') s += '<rect x="' + l + '" y="' + v[1] + '" width="11" height="' + h + '" fill="#ffff00"/>';
    if (t === 'k') s += '<rect x="' + l + '" y="' + v[1] + '" width="11" height="' + h + '" fill="#54ffff"/><rect x="' + (l + 6) + '" y="' + v[1] + '" width="4" height="' + h + '" fill="#1020f0"/>';
    if (t === 'b') s += '<rect x="' + (l + 2) + '" y="' + v[1] + '" width="7" height="' + h + '" fill="#1060f0"/>';
    if (t === 'g') s += '<rect x="' + l + '" y="' + v[1] + '" width="11" height="' + h + '" fill="#00e000"/><rect x="' + (l + 3) + '" y="' + v[1] + '" width="5" height="' + h + '" fill="#1020f0"/>';
    if (t === 'l') s += '<rect x="' + l + '" y="' + v[1] + '" width="11" height="' + h + '" fill="#00e000"/>';
    if (t === 'w') s += '<path d="M' + l + ' ' + v[1] + ' H' + (l + 11) + '" stroke="#e0e0e0" stroke-width="2"/>';
    return s;
  }
  var c = '';
  A.forEach(function (s, i) { c += candle(i, s, 520); });
  B.forEach(function (s, i) { c += candle(i + 74, s, 90); });
  $('candles').innerHTML = c;

  /* ---- price moving averages ---- */
  var l = '';
  var blueTop = [[0, 479], [207, 503]].concat(pts('a', [425, 0, 600, 65, 760, 100, 950, 170, 1100, 225, 1200, 270, 1340, 305, 1440, 325, 1560, 328]),
    pts('b', [260, 1560, 340, 1470, 450, 1395, 630, 1320, 760, 1270, 860, 1220, 960, 1185, 1170, 1125, 1290, 1085, 1400, 1050]));
  var blueLow = pts('a', [10, 150, 90, 200, 140, 235, 200, 262, 340, 318, 450, 355, 560, 385, 720, 405, 890, 417]);
  var blueLow2 = [[905, 643]].concat(pts('b', [420, 1560, 620, 1490, 850, 1465, 1000, 1445, 1130, 1435, 1220, 1410, 1397, 1362]));
  var red = pts('a', [10, 345, 60, 365, 120, 400, 200, 465, 270, 495, 340, 517, 520, 518, 575, 490, 640, 440, 700, 415, 760, 397, 890, 378, 1100, 370, 1430, 362, 1500, 335, 1568, 310])
    .concat(pts('b', [140, 1540, 190, 1480, 260, 1360, 340, 1150, 400, 1010, 470, 905, 540, 840, 630, 750, 700, 745, 760, 770, 800, 800, 850, 870, 900, 950, 950, 1005, 1000, 1025, 1070, 1075, 1140, 1125, 1200, 1130, 1300, 1145, 1395, 1160]));
  var white = pts('a', [10, 445, 40, 440, 100, 470, 140, 540, 180, 610, 200, 625, 225, 605, 270, 560, 320, 520, 370, 465, 430, 435, 480, 445, 520, 470, 570, 470, 610, 400, 650, 325, 690, 300, 720, 310, 760, 355, 800, 375, 830, 385, 870, 370, 930, 360, 1000, 365, 1050, 370, 1105, 370, 1240, 372, 1262, 345, 1300, 370, 1340, 370, 1390, 320, 1440, 270, 1515, 230, 1568, 250])
    .concat(pts('b', [100, 1540, 130, 1400, 170, 1270, 210, 1100, 270, 900, 340, 450, 370, 380, 395, 320, 420, 350, 445, 420, 470, 560, 500, 740, 530, 860, 570, 980, 595, 1010, 625, 980, 680, 990, 750, 1050, 780, 1030, 830, 970, 870, 935, 900, 960, 950, 1020, 1000, 1110, 1030, 1220, 1060, 1295, 1120, 1330, 1150, 1310, 1190, 1180, 1240, 1075, 1300, 1045, 1340, 1070, 1395, 1060]));
  var yellow = pts('a', [10, 390, 60, 425, 110, 470, 150, 515, 200, 548, 240, 570, 300, 580, 340, 550, 380, 510, 430, 470, 470, 455, 580, 452, 600, 430, 650, 395, 700, 378, 760, 340, 795, 332, 830, 355, 880, 365, 1000, 362, 1100, 370, 1500, 265, 1568, 260])
    .concat(pts('b', [60, 1545, 100, 1545, 160, 1440, 260, 1180, 330, 800, 400, 580, 440, 510, 480, 510, 520, 560, 590, 760, 640, 870, 690, 975, 740, 1018, 810, 985, 850, 985, 890, 1005, 950, 1005, 1000, 1040, 1060, 1140, 1130, 1240, 1180, 1255, 1270, 1190, 1340, 1100, 1395, 1070]));
  var magenta = pts('a', [10, 405, 60, 420, 110, 470, 160, 520, 200, 548, 260, 545, 320, 520, 370, 485, 420, 475, 500, 468, 570, 470, 610, 425, 650, 385, 700, 368, 780, 372, 880, 372, 930, 362, 1100, 368, 1330, 370, 1400, 335, 1470, 290, 1510, 268, 1568, 285])
    .concat(pts('b', [90, 1550, 150, 1350, 260, 1080, 330, 760, 380, 650, 400, 632, 440, 635, 480, 700, 520, 820, 590, 888, 640, 890, 700, 945, 770, 970, 850, 910, 900, 950, 950, 1015, 1030, 1120, 1120, 1230, 1160, 1220, 1220, 1125, 1290, 1125, 1350, 1085, 1395, 1100]));
  l += poly(blueTop, '#1414e8', 1.6) + poly(blueLow, '#1414e8', 1.6) + poly(blueLow2, '#1414e8', 1.6);
  l += poly(red, '#d80808', 1.5) + poly(yellow, '#e0e000', 1.5) + poly(magenta, '#e010e0', 1.5) + poly(white, '#e0e0e0', 1.4);
  $('lines').innerHTML = l;

  /* ---- markers ---- */
  var m = '';
  [[1261, 462], [1429, 497], [1505, 577], [104, 757], [348, 692], [476, 664]].forEach(function (p) { m += '<use href="#star" x="' + p[0] + '" y="' + p[1] + '"/>'; });
  [[1150, 325], [1175, 303], [1201, 442], [1612, 475], [403, 648], [456, 665], [493, 663], [507, 667]].forEach(function (p) { m += '<use href="#big" x="' + p[0] + '" y="' + p[1] + '"/>'; });
  [[1150, 288], [1175, 291], [1201, 405], [1612, 462], [403, 635], [456, 653], [508, 656], [494, 654], [867, 626]].forEach(function (p) { m += '<use href="#dash" x="' + p[0] + '" y="' + p[1] + '"/>'; });
  [[1150, 315], [1175, 292], [1201, 432], [1612, 467], [403, 641], [456, 657], [493, 655], [507, 659], [867, 630]].forEach(function (p) { m += '<use href="#dia" x="' + p[0] + '" y="' + p[1] + '"/>'; });
  $('marks').innerHTML = m;

  /* ---- volume bars: colour + top ---- */
  var V1 = 'r787 r785 c775 c760 c778 c755 c755 r757 c737 r755 r755 r770 r783 r778 c602 r652 r647 c737 r707 c741 r773 r760 r750 c758 c741 r760 r720 r697 r571 c241 r435 r603 c651 c637 c700 r737 r720 c692 c717 r702 r738 r742 r661 c660 r707 r708 c745 r697 c712 c750 c760 r755 c725 c758 r778 r638 c453 c647 r706 r710 c708 r751 r692 c722 r494 r616 c722 r634 r665 r557 c660 c713 c678 r655'.split(' ');
  var V2 = 'r1375 c1355 r1393 r1263 r1055 r1123 r1415 r722 r762 r596 r745 r213 r610 r200 c838 r403 c482 r578 c91 c480 c770 r902 r1078 r983 r853 c820 c1032 r1168 r1205 c1032 r803 r835 r970 r920 c980 c965 r1065 r1250 c1190 c1270 c1302 c1307 r1330 r1280 r1277 r1272 c897 r695 c941 c1145 c1203 r1083 r1200 r1110 c1158 c1145'.split(' ');
  function bar(i, spec, base) {
    var top = Math.round(base + spec.slice(1) / 3), x = Math.round(X(i)) - 5, h = 1273 - top;
    return spec.charAt(0) === 'c'
      ? '<rect x="' + x + '" y="' + top + '" width="11" height="' + h + '" fill="#54ffff"/>'
      : '<rect x="' + (x + .5) + '" y="' + (top + .5) + '" width="10" height="' + h + '" fill="#000" stroke="#ff2828"/>';
  }
  var v = '';
  V1.forEach(function (s, i) { v += bar(i, s, 1000); });
  V2.forEach(function (s, i) { v += bar(i + 74, s, 780); });
  var vw = pts('c', [10, 772, 40, 785, 130, 770, 170, 762, 190, 752, 230, 752, 285, 770, 320, 725, 360, 690, 390, 670, 430, 715, 460, 742, 500, 757, 550, 752, 590, 735, 615, 640, 640, 545, 665, 510, 690, 498, 710, 512, 735, 610, 760, 675, 800, 697, 820, 716, 870, 717, 900, 710, 960, 697, 1000, 705, 1060, 735, 1150, 757, 1180, 730, 1210, 665, 1260, 630, 1290, 655, 1310, 700, 1350, 717, 1375, 670, 1420, 650, 1455, 625, 1490, 645, 1568, 660])
    .concat(pts('d', [0, 1325, 20, 1345, 60, 1355, 90, 1335, 130, 1240, 155, 1250, 190, 1080, 250, 850, 275, 605, 300, 585, 322, 470, 347, 520, 372, 452, 395, 505, 425, 500, 465, 403, 490, 480, 535, 660, 560, 840, 590, 920, 650, 965, 695, 1040, 725, 1052, 770, 970, 800, 912, 820, 902, 870, 985, 920, 1100, 985, 1265, 1035, 1300, 1085, 1295, 1130, 1090, 1160, 1010, 1200, 978, 1225, 1020, 1255, 1125, 1295, 1150, 1315, 1135]));
  var vy = pts('c', [10, 760, 40, 770, 140, 773, 190, 765, 290, 760, 330, 730, 360, 720, 460, 720, 500, 710, 535, 737, 590, 740, 620, 680, 660, 635, 720, 603, 800, 598, 840, 665, 880, 707, 1030, 708, 1060, 716, 1100, 716, 1160, 745, 1210, 698, 1280, 690, 1345, 680, 1375, 653, 1410, 680, 1450, 675, 1490, 650, 1568, 640])
    .concat(pts('d', [0, 1308, 35, 1330, 85, 1328, 120, 1295, 155, 1298, 205, 1180, 255, 1030, 300, 840, 322, 740, 347, 722, 395, 555, 420, 540, 450, 470, 485, 465, 535, 580, 560, 660, 585, 660, 635, 765, 660, 850, 705, 985, 735, 988, 795, 965, 850, 995, 900, 1008, 925, 1005, 995, 1140, 1085, 1255, 1135, 1170, 1200, 1135, 1260, 1085, 1315, 1055]));
  v += poly(vy, '#e0e000', 1.4) + poly(vw, '#e0e0e0', 1.3);
  $('vol').innerHTML = v;
})();
```
